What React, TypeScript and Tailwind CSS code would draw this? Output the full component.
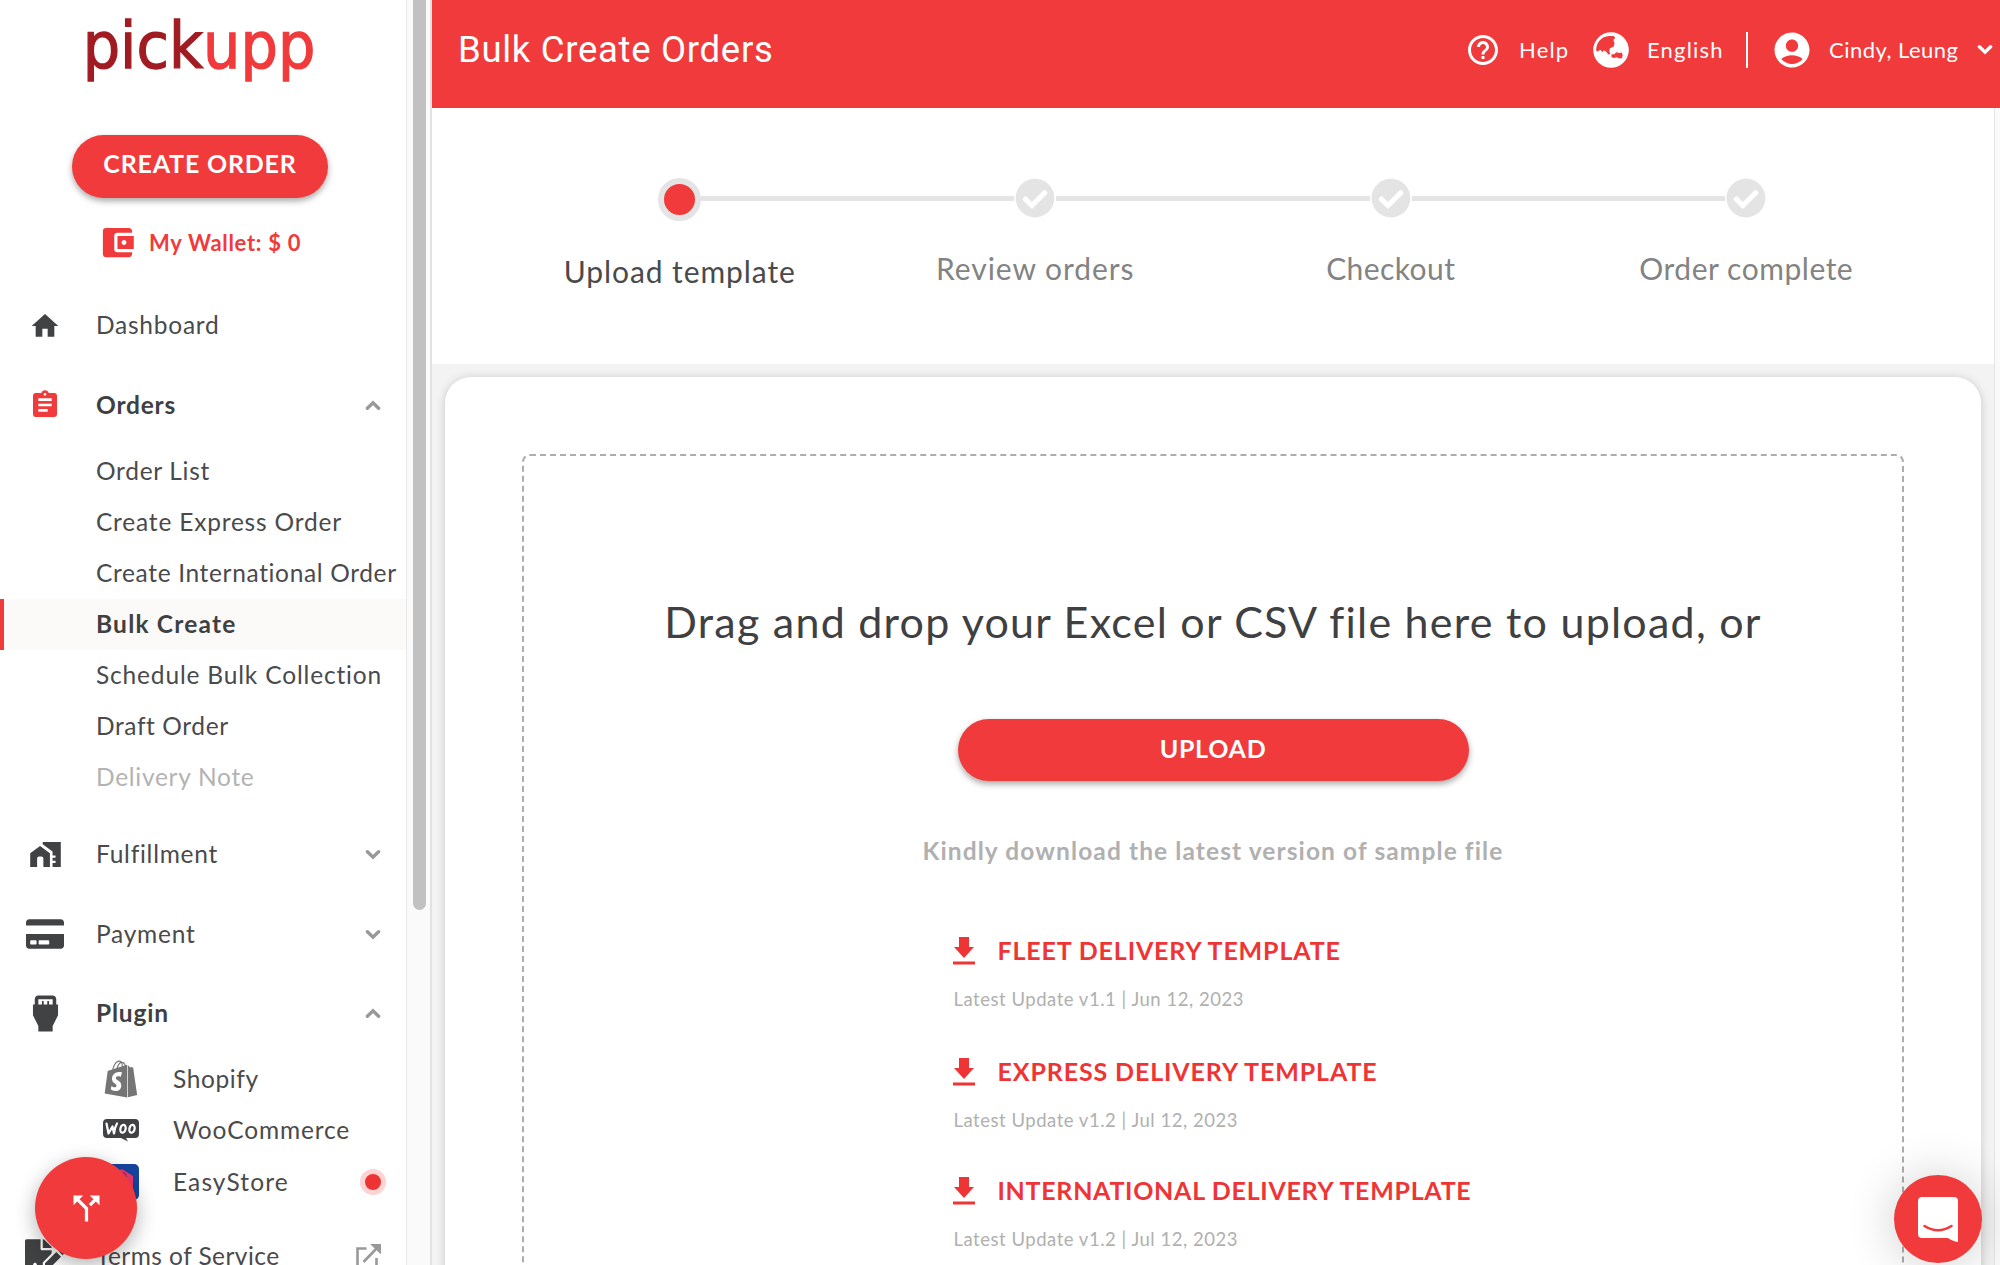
import React from "react";
import { MdHome, MdAssignment, MdSettingsInputHdmi, MdAccountBalanceWallet, MdHelpOutline, MdAccountCircle, MdCallSplit } from "react-icons/md";
import { FaCreditCard, FaFileSignature, FaShopify, FaCheckCircle } from "react-icons/fa";

function Chevron({ up = false, className }: { up?: boolean; className: string }) {
  return (
    <svg viewBox="0 0 16 11" className={className} fill="none" stroke="currentColor" strokeWidth="3.4" strokeLinecap="round" strokeLinejoin="miter">
      <path d={up ? "M2.4 8.2 8 2.8l5.6 5.4" : "M2.4 2.8 8 8.2l5.6-5.4"} />
    </svg>
  );
}

function Globe() {
  return (
    <svg viewBox="0 0 36 36" className="h-9 w-9">
      <circle cx="18" cy="18" r="17.8" fill="#fff" />
      <path d="M3.200 18.800C2.800 10.500 8.500 4.300 16 3.900l4.500.2 1.800 1.700-1.900 2.200 1.200 3.400-1 3.200-3.800 2-.4 3 .8 2.400-1.800.4-2.800-3.300-2-.6-1.400 1.800-1.400-2.200-1.600.2-1.200 1.300zM18.400 22.600l3.400-.6 1.200-1.800 3.400.8 2.200-.4 1.200 2.600-1 3-2.600.4-2.400-1.400-3 .8-2.400-1z" fill="#f03a3b" />
    </svg>
  );
}

function HomeWorkIcon() {
  return (
    <svg viewBox="0 0 93 76" className="h-[25px] w-[31px]" fill="currentColor">
      <path d="M0 76V34L30 12l30 22v42H40V50q0-6-6-6h-7q-6 0-6 6v26z" />
      <path d="M38 0h55v76H68V64h9v-7h-9v-9h9v-7h-9V29L38 7z" />
    </svg>
  );
}

function DownloadIcon() {
  return (
    <svg viewBox="0 0 22 28" className="h-7 w-[22px] shrink-0" fill="#ef3435">
      <path d="M6 0h10v10h5L11 21 1 10h5zM0 24.500h22v3H0z" />
    </svg>
  );
}

function WooIcon() {
  return (
    <svg viewBox="0 0 36 23" className="h-[23px] w-9">
      <path d="M4 0h28a4 4 0 0 1 4 4v11a4 4 0 0 1-4 4h-9l2 3.500-7-3.500H4a4 4 0 0 1-4-4V4a4 4 0 0 1 4-4z" fill="#414244" />
      <g fill="none" stroke="#fff" strokeWidth="2.200" strokeLinecap="round" strokeLinejoin="round">
        <path d="M3.500 4.500 5.500 14.500l4-7 1.500 7c.5-4 1.500-7.500 3-10" />
        <ellipse cx="20" cy="9.800" rx="2.600" ry="4" transform="rotate(14 20 9.800)" />
        <ellipse cx="29" cy="9.800" rx="2.600" ry="4" transform="rotate(14 29 9.800)" />
      </g>
    </svg>
  );
}

function EasyStoreIcon() {
  return (
    <svg viewBox="0 0 36 36" className="h-9 w-9">
      <rect width="36" height="36" rx="5" fill="#16449f" />
      <path d="M6 11 19 5l11 7v19H6z" fill="#f2386f" />
      <path d="M14 12c0-5 9-5 9 1" fill="none" stroke="#7a2f86" strokeWidth="1.500" />
    </svg>
  );
}

function ExternalIcon() {
  return (
    <svg viewBox="0 0 25 25" className="h-[25px] w-[25px]" fill="none" stroke="#999" strokeWidth="2.600">
      <path d="M10.500 4.500h-9v19h19V14M7.500 18 20 5" />
      <path d="M14 0h11v10.500z" fill="#999" stroke="none" />
    </svg>
  );
}

function MenuRow({ icon, label, bold, tight, end }: { icon: React.ReactNode; label: string; bold?: boolean; tight?: boolean; end?: React.ReactNode }) {
  return (
    <div className="flex h-[79.500px] shrink-0 items-center">
      <div className="ml-[21px] mr-[27px] flex w-12 items-center justify-center text-[#414244]">{icon}</div>
      <span
        className={
          "text-[24.500px] whitespace-nowrap " +
          (bold ? "font-bold tracking-[0.8px] text-[#3f4042]" : tight ? "tracking-[0.45px] text-[#4a4a4c]" : "tracking-[0.75px] text-[#4a4a4c]")
        }
      >
        {label}
      </span>
      {end && <div className="ml-auto mr-[25px] flex text-[#999]">{end}</div>}
    </div>
  );
}

const orderItems = [
  ["Order List", "tracking-[0.7px]"],
  ["Create Express Order", "tracking-[0.8px]"],
  ["Create International Order", "tracking-[0.65px]"],
  ["Bulk Create", "tracking-[1.2px]"],
  ["Schedule Bulk Collection", "tracking-[0.83px]"],
  ["Draft Order", "tracking-[0.6px]"],
  ["Delivery Note", "tracking-[0.72px]"],
];

const plugins = [
  { label: "Shopify", tracking: "tracking-[0.6px]", icon: <FaShopify className="h-[38px] w-[34px] text-[#757575]" /> },
  { label: "WooCommerce", tracking: "tracking-[0.86px]", icon: <WooIcon /> },
  { label: "EasyStore", tracking: "tracking-[1.1px]", icon: <EasyStoreIcon />, dot: true },
];

function Sidebar() {
  return (
    <aside className="relative flex h-full w-[406px] shrink-0 flex-col overflow-hidden bg-white">
      <div className="flex h-[135px] shrink-0 origin-top scale-y-[1.080] justify-center pr-[8px] pt-[7px] font-['DejaVu_Sans'] text-[59px] leading-[72px]">
        <span className="text-[#a01c22] [-webkit-text-stroke:1.2px_#a01c22]">pick</span>
        <span className="text-[#f03a3b] [-webkit-text-stroke:1.2px_#f03a3b]">upp</span>
      </div>
      <button className="ml-[72px] flex h-[63px] w-[256px] shrink-0 items-center justify-center rounded-full bg-[#f03a3b] pb-[5px] text-[25px] font-bold tracking-[0.8px] text-white shadow-[0_3px_6px_rgba(0,0,0,0.35)]">CREATE ORDER</button>
      <div className="ml-[98px] mt-[24px] flex h-10 shrink-0 items-center text-[#f03a3b]">
        <MdAccountBalanceWallet className="h-[39px] w-[39px]" />
        <span className="ml-3 text-[22px] font-bold tracking-[0.7px]">My Wallet: $ 0</span>
      </div>
      <nav className="mt-6 flex flex-col">
        <MenuRow icon={<MdHome className="h-8 w-8" />} label="Dashboard" />
        <MenuRow icon={<MdAssignment className="h-8 w-[34px] text-[#f03a3b]" />} label="Orders" bold end={<Chevron up className="h-[11px] w-4" />} />
        <ul className="mb-3 mt-px">
          {orderItems.map(([label, tracking], i) => (
            <li
              key={label}
              className={
                "flex h-[51px] items-center border-l-4 pl-[92px] text-[24.500px] whitespace-nowrap " +
                (i === 3 ? "border-[#f03a3b] bg-[#fcfaf9] font-bold text-[#3f4042] " : i === 6 ? "border-transparent text-[#b3b3b3] " : "border-transparent text-[#4a4a4c] ") +
                tracking
              }
            >
              {label}
            </li>
          ))}
        </ul>
        <MenuRow icon={<HomeWorkIcon />} label="Fulfillment" end={<Chevron className="h-[11px] w-4" />} />
        <MenuRow icon={<FaCreditCard className="h-[34px] w-[38px]" />} label="Payment" end={<Chevron className="h-[11px] w-4" />} />
        <MenuRow icon={<MdSettingsInputHdmi className="h-[43px] w-[43px]" />} label="Plugin" bold end={<Chevron up className="h-[11px] w-4" />} />
        <ul className="mb-[9px]">
          {plugins.map((p) => (
            <li key={p.label} className="flex h-[51.500px] items-center">
              <div className="ml-[103px] flex w-9 justify-center">{p.icon}</div>
              <span className={"ml-[34px] text-[24.500px] text-[#4a4a4c] " + p.tracking}>{p.label}</span>
              {p.dot && <div className="ml-auto mr-5 h-[26px] w-[26px] rounded-full border-[5px] border-[#fdd3d3] bg-[#ee3334]" />}
            </li>
          ))}
        </ul>
        <MenuRow icon={<FaFileSignature className="h-9 w-[40px]" />} label="Terms of Service" tight end={<ExternalIcon />} />
      </nav>
      <button className="absolute left-[35px] top-[1157px] flex h-[102px] w-[102px] items-center justify-center rounded-full bg-[#f03a3b] text-white shadow-[0_6px_20px_rgba(0,0,0,0.3)]">
        <MdCallSplit className="h-[39px] w-[39px]" />
      </button>
    </aside>
  );
}

function Header() {
  return (
    <header className="flex h-[108px] shrink-0 items-center bg-[#f03a3b] pb-[9px] text-[22px] whitespace-nowrap text-white">
      <h1 className="ml-[26px] pt-px font-['Roboto'] text-[36.500px] tracking-[0.7px]">Bulk Create Orders</h1>
      <MdHelpOutline className="ml-auto h-9 w-9" />
      <span className="ml-[18px] w-[49px] tracking-[1.2px]">Help</span>
      <div className="ml-[25px]"><Globe /></div>
      <span className="ml-[18px] w-[74px] tracking-[1.2px]">English</span>
      <div className="ml-[25px] h-9 w-[2px] bg-white" />
      <MdAccountCircle className="ml-[23px] h-[42px] w-[42px]" />
      <span className="ml-[16px] w-[129px] tracking-[0.47px]">Cindy, Leung</span>
      <Chevron className="ml-[19px] mr-[7px] h-[11px] w-4" />
    </header>
  );
}

const steps = [
  ["Upload template", "tracking-[0.92px]"],
  ["Review orders", "tracking-[0.95px]"],
  ["Checkout", "tracking-[0.42px]"],
  ["Order complete", "tracking-[0.53px]"],
];

function Stepper() {
  return (
    <div className="grid h-[256px] shrink-0 grid-cols-4 bg-white pl-[70px] pr-[70px] pt-[69px]">
      {steps.map(([label, tracking], i) => (
        <div key={label} className="flex flex-col items-center">
          <div className="flex h-[42px] w-full items-center">
            <div className={i === 0 ? "h-[5px] flex-1" : "h-[5px] flex-1 bg-[#e4e4e4]"} />
            {i === 0 ? (
              <div className="mt-[3px] h-[43px] w-[43px] rounded-full border-[6px] border-[#e4e4e4] bg-[#f03a3b]" />
            ) : (
              <FaCheckCircle className="mx-[1px] h-10 w-10 text-[#e4e4e4]" />
            )}
            <div className={i === 3 ? "h-[5px] flex-1" : "h-[5px] flex-1 bg-[#e4e4e4]"} />
          </div>
          <span className={(i === 0 ? "mt-[34px] text-[#4a4a4c] " : "mt-[31px] text-[#838383] ") + "text-[30px] leading-9 " + tracking}>{label}</span>
        </div>
      ))}
    </div>
  );
}

const templates = [
  ["FLEET DELIVERY TEMPLATE", "Latest Update v1.1 | Jun 12, 2023", "tracking-[0.84px]", "h-[121px]"],
  ["EXPRESS DELIVERY TEMPLATE", "Latest Update v1.2 | Jul 12, 2023", "tracking-[0.87px]", "h-[119px]"],
  ["INTERNATIONAL DELIVERY TEMPLATE", "Latest Update v1.2 | Jul 12, 2023", "tracking-[0.7px]", "h-[120px]"],
];

function UploadCard() {
  return (
    <div className="ml-[13px] mr-[13px] mt-[13px] h-[1000px] shrink-0 rounded-[26px] bg-white px-[77px] pt-[77px] shadow-[0_1px_10px_rgba(0,0,0,0.18)]">
      <div className="flex h-[1000px] flex-col items-center rounded-lg border-2 border-dashed border-[#adadad] pt-[140px]">
        <h2 className="whitespace-nowrap text-[43px] leading-[52px] tracking-[1.240px] text-[#3f4042]">Drag and drop your Excel or CSV file here to upload, or</h2>
        <button className="mt-[71px] flex h-[62px] w-[511px] items-center justify-center rounded-full bg-[#f03a3b] pb-[3px] text-[25px] font-bold tracking-[0.72px] text-white shadow-[0_3px_6px_rgba(0,0,0,0.35)]">UPLOAD</button>
        <p className="mt-[55px] text-[24.500px] font-bold leading-[30px] tracking-[1.1px] text-[#b0b0b0]">Kindly download the latest version of sample file</p>
        <ul className="mt-[69px] w-[521px]">
          {templates.map(([name, note, tracking, height]) => (
            <li key={name} className={height}>
              <div className="flex h-8 items-center gap-[23px] whitespace-nowrap text-[#ef3435]">
                <DownloadIcon />
                <span className={"text-[25px] font-bold " + tracking}>{name}</span>
              </div>
              <p className="mt-5 pl-px text-[18.500px] leading-6 tracking-[0.52px] text-[#b0b0b0]">{note}</p>
            </li>
          ))}
        </ul>
      </div>
    </div>
  );
}

export default function App() {
  return (
    <div className="relative flex h-[1265px] w-[2000px] overflow-hidden bg-white font-['Lato',sans-serif]">
      <Sidebar />
      <div className="flex w-[26px] shrink-0 border-l border-r-2 border-l-[#e8e8e8] border-r-[#e2e2e2] bg-[#fafafa] pl-[5.500px]">
        <div className="h-[910px] w-[13px] rounded-b-full rounded-t-md bg-[#c1c1c1]" />
      </div>
      <main className="flex min-w-0 flex-1 flex-col">
        <Header />
        <div className="flex min-h-0 flex-1">
          <div className="flex min-w-0 flex-1 flex-col overflow-hidden bg-[#f3f3f3]">
            <Stepper />
            <UploadCard />
          </div>
          <div className="w-[6px] shrink-0 border-l border-[#e4e4e4] bg-[#fafafa]" />
        </div>
      </main>
      <button className="absolute left-[1894px] top-[1175px] flex h-[88px] w-[88px] items-center justify-center rounded-full bg-[#f03a3b] shadow-[0_2px_50px_rgba(0,0,0,0.2)]">
        <svg viewBox="0 0 40 45" className="h-[45px] w-10">
          <path d="M4 0h32a4 4 0 0 1 4 4v41c-4-.5-7-2-10-4H4a4 4 0 0 1-4-4V4a4 4 0 0 1 4-4z" fill="#fff" />
          <path d="M6.500 29q13.500 8.500 27 0" fill="none" stroke="#f03a3b" strokeWidth="2.600" strokeLinecap="round" />
        </svg>
      </button>
    </div>
  );
}
